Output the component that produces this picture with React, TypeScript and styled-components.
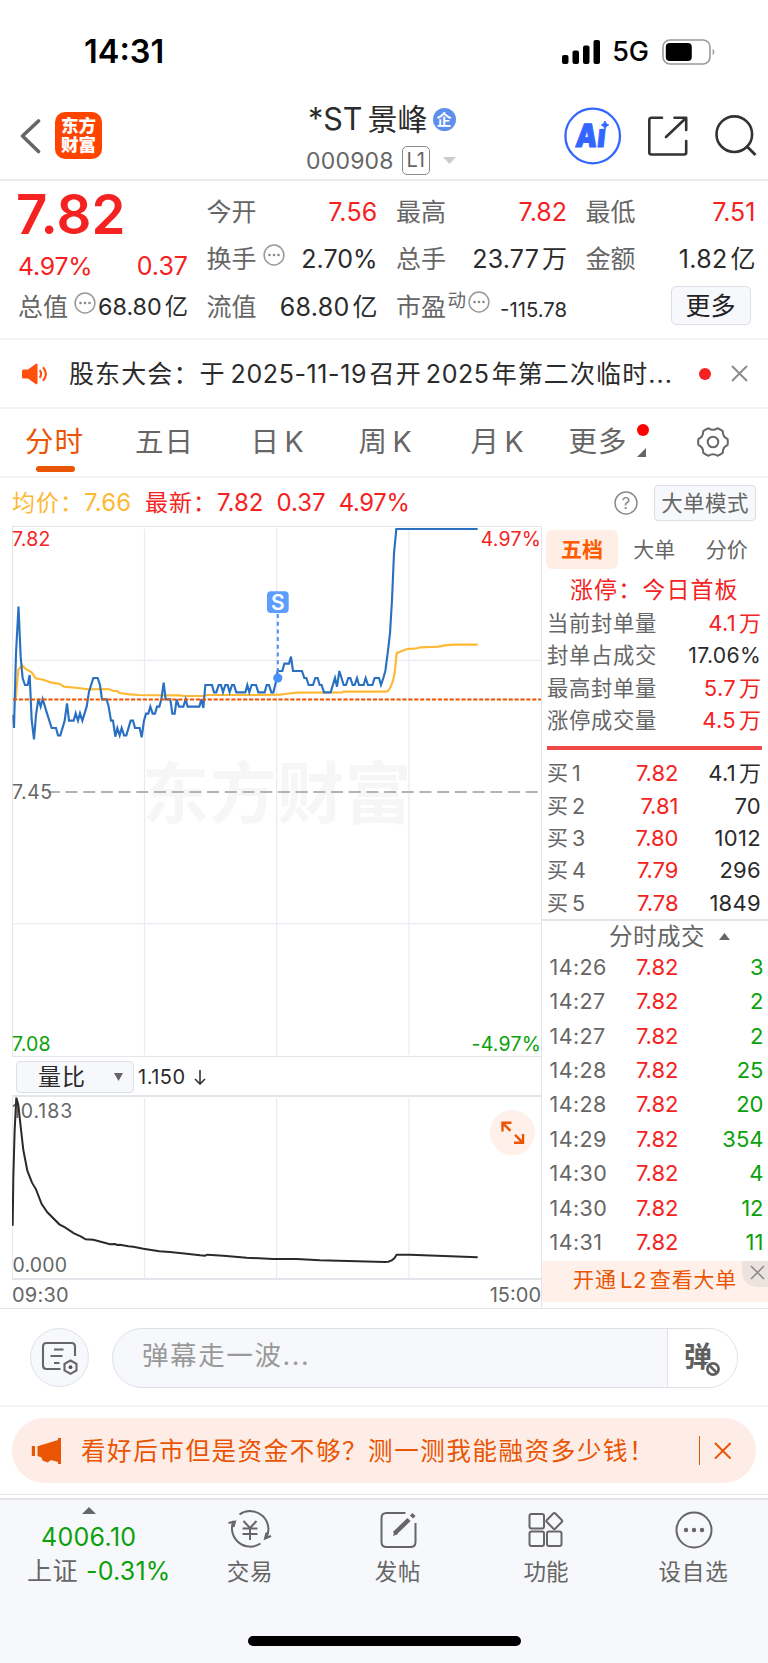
import React from "react";
import styled, { createGlobalStyle } from "styled-components";

const RED = "#f52222";
const GREEN = "#0aa10a";
const ORANGE = "#ea5504";
const GRAY = "#666";
const DARK = "#2b2b2b";
const LINE = "#e4e5ea";
const PANEL = "#f7f8fb";

const GlobalStyle = createGlobalStyle`
  * { box-sizing: border-box; }
  body {
    margin: 0;
    background: #fff;
    font-family: Inter, "Noto Sans CJK SC", sans-serif;
    color: ${DARK};
    -webkit-font-smoothing: antialiased;
  }
  svg { display: block; flex: none; }
`;

const Screen = styled.div`
  width: 768px;
  height: 1663px;
  display: flex;
  flex-direction: column;
  overflow: hidden;
  background: #fff;
`;

const Txt = styled.span<{ $s: number; $c?: string; $w?: number; $ls?: number; $ml?: number; $mt?: number }>`
  display: block;
  white-space: pre;
  line-height: 30px;
  font-size: ${(p) => p.$s}px;
  color: ${(p) => p.$c ?? DARK};
  font-weight: ${(p) => p.$w ?? 400};
  letter-spacing: ${(p) => p.$ls ?? 0}px;
  margin-left: ${(p) => p.$ml ?? 0}px;
  margin-top: ${(p) => p.$mt ?? 0}px;
`;

/* ---------- status bar ---------- */
const StatusBar = styled.header`
  height: 96px;
  padding: 7px 51px 0 84px;
  display: flex;
  align-items: center;
`;
const StatusRight = styled.div`
  margin-left: auto;
  display: flex;
  align-items: center;
`;

/* ---------- title bar ---------- */
const TitleBar = styled.div`
  height: 85px;
  border-bottom: 2px solid #ececef;
  display: grid;
  grid-template-columns: 307px 254px 1fr;
`;
const TitleLeft = styled.div`
  display: flex;
  padding: 16px 0 0 20px;
`;
const Logo = styled.div`
  width: 47px;
  height: 47px;
  margin-left: 14px;
  border-radius: 10px;
  background: #ff4400;
  color: #fff;
  font-weight: 900;
  font-size: 17.5px;
  line-height: 19px;
  text-align: center;
  padding-top: 4px;
`;
const TitleMid = styled.div`
  padding-top: 7px;
`;
const Row = styled.div<{ $h?: number; $pl?: number }>`
  display: flex;
  align-items: center;
  height: ${(p) => p.$h ?? 30}px;
  padding-left: ${(p) => p.$pl ?? 0}px;
`;
const Badge = styled.span`
  width: 23px;
  height: 23px;
  margin: 2px 0 0 5px;
  border-radius: 50%;
  background: #5f8fec;
  color: #fff;
  font-size: 15px;
  font-weight: 700;
  line-height: 23px;
  text-align: center;
`;
const LevelTag = styled.span`
  width: 28px;
  height: 29px;
  margin-left: 8px;
  border: 1.5px solid #8a8a8a;
  border-radius: 5px;
  color: ${GRAY};
  font-size: 20px;
  line-height: 27px;
  text-align: center;
`;
const TitleRight = styled.div`
  display: flex;
  padding-left: 3px;
  padding-top: 11px;
`;

/* ---------- quote block ---------- */
const Quote = styled.section`
  height: 159px;
  border-bottom: 2px solid #f3f3f5;
  padding: 7px 12px 0 18px;
  display: grid;
  grid-template-columns: 170px 171px 171px 170px;
  column-gap: 18.5px;
`;
const Column = styled.div`
  display: flex;
  flex-direction: column;
`;
const Pair = styled.div<{ $h?: number }>`
  height: ${(p) => p.$h ?? 47.5}px;
  display: flex;
  align-items: center;
  justify-content: space-between;
`;
const Label = styled.div`
  display: flex;
  align-items: center;
`;
const Raised = styled.span`
  display: flex;
  align-items: center;
  margin-top: -9px;
`;
const MoreButton = styled.button`
  width: 80px;
  height: 39px;
  margin: 3px 5px 0 auto;
  padding: 0;
  border: 1.5px solid #dcdfe6;
  border-radius: 5px;
  background: ${PANEL};
  color: #222;
  font: 400 25px/36px Inter, "Noto Sans CJK SC", sans-serif;
`;

/* ---------- notice ---------- */
const Notice = styled.div`
  height: 69px;
  border-bottom: 2px solid #f3f3f5;
  padding-left: 22px;
  display: flex;
  align-items: center;
`;
const Dot = styled.i<{ $ml?: number }>`
  width: 12px;
  height: 12px;
  margin-left: ${(p) => p.$ml ?? 0}px;
  border-radius: 50%;
  background: ${RED};
`;

/* ---------- tabs ---------- */
const Tabs = styled.nav`
  height: 69px;
  border-bottom: 2px solid #f3f3f5;
  display: flex;
  padding-left: 25px;
`;
const Tab = styled.div<{ $w: number; $on?: boolean }>`
  width: ${(p) => p.$w}px;
  position: relative;
  padding-top: 11px;
  font-size: 28.5px;
  letter-spacing: 1px;
  word-spacing: -4.5px;
  line-height: 44px;
  white-space: pre;
  color: ${(p) => (p.$on ? ORANGE : GRAY)};
  &::after {
    content: "";
    display: ${(p) => (p.$on ? "block" : "none")};
    width: 39px;
    height: 6px;
    margin: 2px 0 0 10.5px;
    border-radius: 3px;
    background: ${ORANGE};
  }
`;
const TabDot = styled(Dot)`
  position: absolute;
  left: 68.5px;
  top: 15px;
  background: #ff0000;
`;
const TabCorner = styled.svg`
  position: absolute;
  left: 68px;
  top: 39px;
`;

/* ---------- info line ---------- */
const Info = styled.div`
  height: 48px;
  padding: 1px 12px 0;
  display: flex;
  align-items: center;
`;
const ModeButton = styled.button`
  width: 102px;
  height: 36px;
  margin-left: 16px;
  padding: 0;
  border: 1.5px solid #dcdfe6;
  border-radius: 4px;
  background: ${PANEL};
  color: ${GRAY};
  font: 400 21.5px/32px Inter, "Noto Sans CJK SC", sans-serif;
  letter-spacing: 0.4px;
`;

/* ---------- main ---------- */
const Main = styled.main`
  height: 783px;
  display: grid;
  grid-template-columns: 542px 226px;
  border-bottom: 1.5px solid ${LINE};
`;
const ChartSide = styled.div`
  padding-left: 12px;
  border-right: 1.5px solid ${LINE};
`;
const Selector = styled.div`
  height: 38px;
  padding: 2px 0 0 4px;
  display: flex;
  align-items: center;
`;
const SelectBox = styled.div`
  width: 118px;
  height: 32px;
  padding-left: 21px;
  border: 1.5px solid #dcdfe6;
  border-radius: 4px;
  background: ${PANEL};
  display: flex;
  align-items: center;
`;
const TimeAxis = styled.div`
  height: 27px;
  display: flex;
  justify-content: space-between;
`;
const BookSide = styled.div`
  display: flex;
  flex-direction: column;
`;
const BookTabs = styled.div`
  height: 47px;
  padding: 4px 0 0 4px;
  display: flex;
`;
const BookTab = styled.div<{ $on?: boolean }>`
  width: ${(p) => (p.$on ? 72 : 72.5)}px;
  height: 39px;
  border-radius: 6px;
  background: ${(p) => (p.$on ? "#ffeee6" : "transparent")};
  color: ${(p) => (p.$on ? "#ff5a00" : GRAY)};
  font-weight: ${(p) => (p.$on ? 700 : 400)};
  font-size: 21px;
  line-height: 39px;
  text-align: center;
`;
const LimitTitle = styled.div`
  height: 34px;
  padding-left: 28px;
  color: ${RED};
  font-size: 23px;
  line-height: 35px;
  letter-spacing: 1.1px;
  white-space: pre;
`;
const LimitRow = styled.div`
  height: 32.3px;
  padding: 0 7px 0 5px;
  display: flex;
  align-items: center;
  justify-content: space-between;
`;
const RedBar = styled.div`
  height: 4px;
  margin: 10px 6px 7px 5px;
  background: #f04848;
`;
const TradeRow = styled.div<{ $h: number; $pl: number; $pr: number }>`
  height: ${(p) => p.$h}px;
  padding: 0 ${(p) => p.$pr}px 0 ${(p) => p.$pl}px;
  display: grid;
  grid-template-columns: ${(p) => 136.5 - p.$pl}px 1fr;
  align-items: center;
`;
const Split = styled.div`
  display: flex;
  justify-content: space-between;
`;
const End = styled.div`
  display: flex;
  justify-content: flex-end;
`;
const DealTitle = styled.div`
  height: 31px;
  border-top: 2px solid ${LINE};
  padding: 3px 0 0 67px;
  display: flex;
  align-items: center;
`;
const L2Banner = styled.div`
  height: 41px;
  margin-top: 2px;
  background: #fff0e9;
  padding-left: 31px;
  display: flex;
  align-items: flex-start;
  justify-content: space-between;
`;
const L2Text = styled.div`
  height: 38px;
  display: flex;
  align-items: center;
`;
const L2Close = styled.div`
  width: 26px;
  height: 26px;
  border-bottom-left-radius: 15px;
  background: #ece2de;
  display: flex;
  align-items: center;
  justify-content: center;
  padding: 0 0 4px 4px;
`;

/* ---------- comment bar ---------- */
const CommentBar = styled.div`
  height: 98px;
  border-bottom: 2px solid #f5f5f7;
  padding: 19px 30px 0;
  display: flex;
`;
const RoundButton = styled.div`
  width: 59px;
  height: 59px;
  border: 1.5px solid #dfe1e7;
  border-radius: 50%;
  background: ${PANEL};
`;
const Field = styled.div`
  width: 626px;
  height: 60px;
  margin-left: 23px;
  border: 1.5px solid #dfe1e7;
  border-radius: 30px;
  background: ${PANEL};
  display: flex;
  overflow: hidden;
`;
const FieldText = styled.div`
  width: 554px;
  padding-left: 29px;
  color: #999;
  font-size: 26.5px;
  letter-spacing: 1.6px;
  line-height: 53px;
`;
const FieldAction = styled.div`
  flex: 1;
  position: relative;
  border-left: 1.5px solid #dfe1e7;
  background: #fff;
  color: #606060;
  padding-left: 16px;
  font-size: 28px;
  font-weight: 700;
  line-height: 56px;
`;
const BanMark = styled.svg`
  position: absolute;
  left: 36px;
  top: 31px;
`;

/* ---------- promo ---------- */
const PromoWrap = styled.div`
  height: 88px;
  padding: 11px 12px 0;
  border-bottom: 1.5px solid ${LINE};
`;
const Promo = styled.div`
  height: 65px;
  border-radius: 33px;
  background: #fdede6;
  padding: 0 24px 0 19px;
  display: flex;
  align-items: center;
`;
const PromoDivider = styled.i`
  width: 1.5px;
  height: 29px;
  margin-left: auto;
  background: ${ORANGE};
`;

/* ---------- bottom nav ---------- */
const Bottom = styled.footer`
  flex: 1;
  margin-top: 3px;
  border-top: 2px solid ${LINE};
  background: ${PANEL};
  display: flex;
  flex-direction: column;
`;
const NavRow = styled.div`
  height: 136px;
  display: grid;
  grid-template-columns: 176px 148px 148px 148px 147px;
`;
const IndexCell = styled.div`
  padding: 7px 0 0 27px;
`;
const NavItem = styled.div`
  padding-top: 10px;
  display: flex;
  flex-direction: column;
  align-items: center;
  gap: 7px;
`;
const HomeBar = styled.div`
  width: 273px;
  height: 10px;
  margin-left: 247.5px;
  border-radius: 5px;
  background: #000;
`;

/* ---------- icons ---------- */
const Icon = styled.svg<{ $ml?: number | "auto" }>`
  margin-left: ${(p) => (p.$ml === "auto" ? "auto" : `${p.$ml ?? 0}px`)};
`;
const Dots = ({ ml = 0 }: { ml?: number }) => (
  <Icon $ml={ml} width="22" height="22" viewBox="0 0 22 22">
    <circle cx="11" cy="11" r="9.9" fill="none" stroke="#999" strokeWidth="1.5" />
    {[6.5, 11, 15.5].map((x) => (
      <circle key={x} cx={x} cy="11" r="1.3" fill="#888" />
    ))}
  </Icon>
);
const Cross = ({ r, c, w, ml = 0 }: { r: number; c: string; w: number; ml?: number }) => (
  <Icon $ml={ml} width={r * 2 + 2} height={r * 2 + 2}>
    <path d={`M1 1L${r * 2 + 1} ${r * 2 + 1}M${r * 2 + 1} 1L1 ${r * 2 + 1}`} stroke={c} strokeWidth={w} />
  </Icon>
);

/* Series points are stored in thirds of a pixel. */
const PRICE =
  "40,615 42,654 48,430 55.5,290 62,440 68,505 75,525 83,525 89,495 95,630 102,688 108,615 115,567 122,590 128,567 141,610 155,654 168,654 174,676 181,676 194,632 201,580 207,632 221,632 227,610 234,632 240,610 247,632 260,590 267,545 280,504 293,504 300,525 306,568 320,568 326,590 333,632 339,632 346,680 352,654 359,676 365,654 372,676 379,676 392,632 399,632 405,654 419,654 425,682 432,632 438,611 445,611 451,590 458,611 465,611 471,590 478,590 484,568 491,518 497,568 511,568 517,611 524,611 530,568 537,590 550,590 557,568 563,590 598,590 604,568 610,594 616,525 636,525 642,547 649,547 656,525 663,525 669,547 676,525 683,525 689,547 696,525 702,525 709,547 736,547 742,525 748,547 755,525 768,525 775,547 794,547 800,525 807,525 814,547 820,547 827,520 833,483 847,483 853,461 867,461 873,440 879,483 906,483 913,504 919,504 926,525 939,525 946,504 953,504 959,525 965,525 972,547 992,547 1005,504 1011,530 1018,483 1031,525 1038,525 1045,504 1051,504 1058,525 1064,525 1071,504 1077,525 1091,525 1097,504 1104,525 1117,525 1124,504 1137,504 1143,525 1150,504 1156,483 1163,430 1170,370 1176,270 1182,130 1189,57 1433,57";
const AVERAGE =
  "47,568 55,480 66,465 76,476 95,487 107,505 130,509 155,518 180,522 192,530 235,534 265,538 325,537 340,543 352,543 358,549 390,553 415,555 540,556 552,558 610,558 620,555 780,555 840,554 855,552 890,548 1027,547 1030,545 1158,545 1165,542 1172,530 1179,512 1184,490 1190,430 1205,423 1222,417 1245,416 1262,412 1295,411 1315,410 1335,406 1360,404 1433,404";
const RATIO =
  "38,587 40,440 44,300 49,203 55,225 62,290 70,360 82,422 96,458 108,478 125,522 142,547 178,583 195,592 222,610 242,619 257,628 280,629 330,643 345,642 352,645 360,644 385,649 400,650 430,656 478,664 510,666 560,671 600,676 615,677 622,674 670,677 740,683 820,687 890,687 960,691 1155,696 1165,695 1175,691 1183,685 1190,674 1230,674 1433,682";

const ChartLabel = styled.text<{ $ls?: number }>`
  font-size: 19.5px;
  letter-spacing: ${(p) => p.$ls ?? 0.2}px;
`;
const Watermark = styled.text`
  font-size: 67px;
  font-weight: 700;
  letter-spacing: 0.6px;
  fill: #f6f6f6;
`;

const PriceChart = () => (
  <svg width="529" height="531" viewBox="12 526 529 531">
    <path d="M12 526.5H542M12 1056.500H542M12.5 526V1057.5" stroke={LINE} strokeWidth="1.2" fill="none" />
    <path d="M144.5 529V1055M276.7 529V1055M409 529V1055M13 660.3H541M13 923.7H541" stroke="#e9ebf2" strokeWidth="1.2" />
    <Watermark x="142" y="818">东方财富</Watermark>
    <path d="M47.8 792H541" stroke="#b3b3b3" strokeWidth="1.900" strokeDasharray="12 5.7" />
    <g transform="translate(0 510) scale(0.33333)" fill="none" strokeWidth="6.4">
      <polyline points={AVERAGE} stroke="#fdb933" />
      <polyline points={PRICE} stroke="#2a70c2" />
    </g>
    <path d="M13 699.5H541" stroke={ORANGE} strokeWidth="2.2" strokeDasharray="4.2 1.7" />
    <path d="M277.8 614V674" stroke="#4a90f5" strokeWidth="2" strokeDasharray="4 3.7" />
    <circle cx="277.8" cy="678" r="4.6" fill="#4a8ff5" />
    <rect x="267" y="591.3" width="21.7" height="21.7" rx="4" fill="#5d9dff" />
    <text x="277.9" y="609.6" fontSize="21" fontWeight="600" fill="#fff" textAnchor="middle">S</text>
    <ChartLabel x="12" y="546" fill={RED}>7.82</ChartLabel>
    <ChartLabel x="541" y="546" fill={RED} textAnchor="end">4.97%</ChartLabel>
    <ChartLabel x="12" y="798.5" fill={GRAY} $ls={0.5}>7.45</ChartLabel>
    <ChartLabel x="12" y="1050.5" fill={GREEN}>7.08</ChartLabel>
    <ChartLabel x="541" y="1050.5" fill={GREEN} textAnchor="end">-4.97%</ChartLabel>
  </svg>
);

const RatioChart = () => (
  <svg width="529" height="185" viewBox="12 1095 529 185">
    <path d="M12 1096H542M12 1279H542" stroke={LINE} strokeWidth="2" />
    <path d="M12.5 1096V1279M144.5 1098V1278M276.7 1098V1278M409 1098V1278" stroke="#e9ebf2" strokeWidth="1.2" />
    <ChartLabel x="12" y="1118.3" fill={GRAY} $ls={0.9}>10.183</ChartLabel>
    <ChartLabel x="12.5" y="1271.5" fill={GRAY}>0.000</ChartLabel>
    <polyline points={RATIO} transform="translate(0 1030) scale(0.33333)" fill="none" stroke="#2a2a2a" strokeWidth="6" />
    <circle cx="512.3" cy="1132.5" r="22.6" fill="#fff1ea" />
    <path d="M502.500 1131.500V1122.800H511.500M503 1123.300L510.500 1130.800M523 1134V1142.800H514M522.500 1142.300L515 1134.800" stroke={ORANGE} strokeWidth="2.4" fill="none" />
  </svg>
);

const limits: [string, string, string][] = [
  ["当前封单量", "4.1 万", RED],
  ["封单占成交", "17.06%", DARK],
  ["最高封单量", "5.7 万", RED],
  ["涨停成交量", "4.5 万", RED],
];
const bids: [string, string, string][] = [
  ["1", "7.82", "4.1 万"],
  ["2", "7.81", "70"],
  ["3", "7.80", "1012"],
  ["4", "7.79", "296"],
  ["5", "7.78", "1849"],
];
const deals: [string, string][] = [
  ["14:26", "3"],
  ["14:27", "2"],
  ["14:27", "2"],
  ["14:28", "25"],
  ["14:28", "20"],
  ["14:29", "354"],
  ["14:30", "4"],
  ["14:30", "12"],
  ["14:31", "11"],
];

/* A small gap separates digits from the unit character that follows. */
const Amount = ({ v, s, c, ls = 0 }: { v: string; s: number; c?: string; ls?: number }) => {
  const [num, unit] = v.split(" ");
  return (
    <Label>
      <Txt $s={s} $c={c} $ls={ls}>{num}</Txt>
      {unit && <Txt $s={s} $c={c} $ml={3}>{unit}</Txt>}
    </Label>
  );
};

export default function App() {
  return (
    <Screen>
      <GlobalStyle />
      <StatusBar>
        <Txt $s={32.5} $w={600} $c="#000">14:31</Txt>
        <StatusRight>
          <svg width="39" height="24" viewBox="0 0 39 24">
            <rect x="0" y="15" width="6.5" height="9" rx="2" />
            <rect x="10.5" y="10.5" width="6.5" height="13.5" rx="2" />
            <rect x="21" y="5.5" width="6.5" height="18.5" rx="2" />
            <rect x="31.5" y="0" width="6.5" height="24" rx="2" />
          </svg>
          <Txt $s={27} $w={500} $c="#000" $ml={11}>5G</Txt>
          <Icon $ml={13} width="55" height="26" viewBox="0 0 55 26">
            <rect x="1" y="1" width="47" height="24" rx="7" fill="none" stroke="#999" strokeWidth="1.6" />
            <rect x="3.8" y="4" width="26" height="18" rx="4" />
            <path d="M50.7 9.5Q54 13 50.7 16.5Z" fill="#999" />
          </Icon>
        </StatusRight>
      </StatusBar>

      <TitleBar>
        <TitleLeft>
          <svg width="21" height="48" viewBox="0 0 21 48">
            <path d="M18.500 9L2.500 24L18.500 39.500" fill="none" stroke="#666" strokeWidth="3.6" strokeLinecap="round" strokeLinejoin="round" />
          </svg>
          <Logo>东方<br />财富</Logo>
        </TitleLeft>
        <TitleMid>
          <Row $h={31} $pl={1}>
            <Txt $s={30.5}>*ST</Txt>
            <Txt $s={30} $ml={5}>景峰</Txt>
            <Badge>企</Badge>
          </Row>
          <Row $h={53}>
            <Txt $s={23} $c={GRAY} $ls={0.2} $ml={-1}>000908</Txt>
            <LevelTag>L1</LevelTag>
            <Icon $ml={13} width="13" height="7">
              <path d="M0 0H13L6.5 7Z" fill="#ccc" />
            </Icon>
          </Row>
        </TitleMid>
        <TitleRight>
          <svg width="58" height="58" viewBox="564 107 58 58">
            <circle cx="592.7" cy="136" r="27.3" fill="none" stroke="#3366ff" strokeWidth="2.3" />
            <g transform="translate(574.8 146.5) skewX(-6) scale(0.85 1)">
              <text fontSize="32" fontWeight="900" fill="#3366ff" stroke="#3366ff" strokeWidth="1">Ai</text>
              <rect x="26.500" y="-28" width="14" height="9.500" fill="#fff" />
            </g>
            <path d="M605 121Q605.800 124.400 608.700 125Q605.800 125.700 605 129Q604.200 125.700 601.300 125Q604.200 124.400 605 121Z" fill="#3366ff" stroke="#3366ff" strokeWidth="1" />
          </svg>
          <Icon $ml={25} width="42" height="58" viewBox="647 107 42 58">
            <g fill="none" stroke="#333" strokeWidth="2.6" strokeLinecap="round" strokeLinejoin="round">
              <path d="M662 117.8H651.5Q649.3 117.8 649.3 120V152.5Q649.3 154.5 651.5 154.5H684Q686.2 154.5 686.2 152.5V141" />
              <path d="M674.5 117.8H686.2V130M685.5 118.5L666 137" />
            </g>
          </Icon>
          <Icon $ml={24} width="44" height="58" viewBox="713 107 44 58">
            <circle cx="734.3" cy="134.2" r="17.8" fill="none" stroke="#333" strokeWidth="2.6" />
            <path d="M747 146.5L755.5 155" stroke="#333" strokeWidth="2.8" />
          </Icon>
        </TitleRight>
      </TitleBar>

      <Quote>
        <Column>
          <Pair $h={52}>
            <Txt $s={54.5} $w={600} $c={RED} $ls={0} $ml={-2}>7.82</Txt>
          </Pair>
          <Pair $h={52}>
            <Txt $s={24.8} $c={RED} $ls={-0.2}>4.97%</Txt>
            <Txt $s={25} $c={RED}>0.37</Txt>
          </Pair>
          <Pair $h={30}>
            <Label>
              <Txt $s={25} $c={GRAY}>总值</Txt>
              <Raised><Dots ml={6} /></Raised>
            </Label>
            <Amount v="68.80 亿" s={23.3} />
          </Pair>
        </Column>
        <Column>
          <Pair>
            <Txt $s={25} $c={GRAY}>今开</Txt>
            <Txt $s={25} $c={RED} $ls={0.2}>7.56</Txt>
          </Pair>
          <Pair>
            <Label>
              <Txt $s={25} $c={GRAY}>换手</Txt>
              <Raised><Dots ml={6} /></Raised>
            </Label>
            <Txt $s={25}>2.70%</Txt>
          </Pair>
          <Pair>
            <Txt $s={25} $c={GRAY}>流值</Txt>
            <Amount v="68.80 亿" s={25} ls={0.3} />
          </Pair>
        </Column>
        <Column>
          <Pair>
            <Txt $s={25} $c={GRAY}>最高</Txt>
            <Txt $s={25} $c={RED}>7.82</Txt>
          </Pair>
          <Pair>
            <Txt $s={25} $c={GRAY}>总手</Txt>
            <Amount v="23.77 万" s={25} ls={0.2} />
          </Pair>
          <Pair>
            <Label>
              <Txt $s={25} $c={GRAY}>市盈</Txt>
              <Raised>
                <Txt $s={18.5} $c={GRAY} $ml={1.5} $mt={-4}>动</Txt>
                <Dots ml={2} />
              </Raised>
            </Label>
            <Txt $s={20.3} $mt={6}>-115.78</Txt>
          </Pair>
        </Column>
        <Column>
          <Pair>
            <Txt $s={25} $c={GRAY}>最低</Txt>
            <Txt $s={25} $c={RED}>7.51</Txt>
          </Pair>
          <Pair>
            <Txt $s={25} $c={GRAY}>金额</Txt>
            <Amount v="1.82 亿" s={25} ls={0.3} />
          </Pair>
          <MoreButton>更多</MoreButton>
        </Column>
      </Quote>

      <Notice>
        <svg width="26" height="22" viewBox="0 0 26 22">
          <path d="M1.5 6.5H6L14 .8Q15.5 .5 15.5 2V20Q15.5 21.5 14 21.2L6 15.5H1.500Q0 15.5 0 14V8Q0 6.5 1.5 6.5Z" fill="#ff4f0a" />
          <path d="M17.8 7.2Q20.3 11 17.8 14.8M21 4.3Q26.8 11 21 17.7" fill="none" stroke="#ff4f0a" strokeWidth="2.1" />
        </svg>
        <Txt $s={25} $ls={1.1} $ml={21}>股东大会：于</Txt>
        <Txt $s={25} $ls={0.6} $ml={5}>2025-11-19</Txt>
        <Txt $s={25} $ls={1.1} $ml={2.5}>召开</Txt>
        <Txt $s={25} $ls={0.6} $ml={4}>2025</Txt>
        <Txt $s={25} $ls={1.1} $ml={2}>年第二次临时...</Txt>
        <Dot $ml={26} />
        <Cross r={7.5} c="#8c8c8c" w={2} ml={20} />
      </Notice>

      <Tabs>
        <Tab $w={110} $on>分时</Tab>
        <Tab $w={115.5}>五日</Tab>
        <Tab $w={108}>日 K</Tab>
        <Tab $w={112}>周 K</Tab>
        <Tab $w={98}>月 K</Tab>
        <Tab $w={128.5}>
          更多
          <TabDot />
          <TabCorner width="9" height="9"><path d="M9 0V9H0Z" fill="#666" /></TabCorner>
        </Tab>
        <svg width="32" height="66" viewBox="-16 -33 32 66">
          <g fill="none" stroke="#666" strokeWidth="2">
            <circle r="5.3" />
            <path strokeLinejoin="round" d="M-4.5 -13.8Q0 -10.5 4.5 -13.8Q7.8 -12.6 9.8 -10.8Q9.5 -5.2 14.5 -3Q15.2 0 14.5 3Q9.5 5.2 9.8 10.8Q7.8 12.6 4.5 13.8Q0 10.5 -4.5 13.8Q-7.8 12.6 -9.8 10.8Q-9.5 5.2 -14.5 3Q-15.2 0 -14.5 -3Q-9.5 -5.2 -9.8 -10.8Q-7.8 -12.6 -4.5 -13.8Z" />
          </g>
        </svg>
      </Tabs>

      <Info>
        <Txt $s={23} $ls={1} $c="#fdb933">均价：</Txt>
        <Txt $s={24} $ls={0.2} $c="#fdb933">7.66</Txt>
        <Txt $s={23} $ls={1} $c={RED} $ml={13.5}>最新：</Txt>
        <Txt $s={24} $c={RED}>7.82</Txt>
        <Txt $s={24} $c={RED} $ml={13}>0.37</Txt>
        <Txt $s={23.8} $ls={-0.3} $c={RED} $ml={13}>4.97%</Txt>
        <Icon $ml="auto" width="24" height="24" viewBox="0 0 24 24">
          <circle cx="12" cy="12" r="11" fill="none" stroke="#8a8a8a" strokeWidth="1.5" />
          <text x="12" y="18" fontSize="16.5" fill="#8a8a8a" textAnchor="middle">?</text>
        </Icon>
        <ModeButton>大单模式</ModeButton>
      </Info>

      <Main>
        <ChartSide>
          <PriceChart />
          <Selector>
            <SelectBox>
              <Txt $s={23} $ls={1}>量比</Txt>
              <Icon $ml={28} width="9" height="8"><path d="M0 0H9L4.5 8Z" fill="#666" /></Icon>
            </SelectBox>
            <Txt $s={20} $ls={0.5} $ml={4}>1.150</Txt>
            <Icon $ml={8} width="12" height="15" viewBox="0 0 12 15">
              <path d="M6 0V14M1 9L6 14L11 9" fill="none" stroke="#333" strokeWidth="1.6" />
            </Icon>
          </Selector>
          <RatioChart />
          <TimeAxis>
            <Txt $s={20} $c={GRAY} $ls={0.2}>09:30</Txt>
            <Txt $s={20} $c={GRAY}>15:00</Txt>
          </TimeAxis>
        </ChartSide>
        <BookSide>
          <BookTabs>
            <BookTab $on>五档</BookTab>
            <BookTab>大单</BookTab>
            <BookTab>分价</BookTab>
          </BookTabs>
          <LimitTitle>涨停：今日首板</LimitTitle>
          {limits.map(([label, value, color]) => (
            <LimitRow key={label}>
              <Txt $s={21.3} $c={GRAY} $ls={0.7}>{label}</Txt>
              <Amount v={value} s={value.endsWith("%") ? 21.2 : 22} c={color} ls={0.3} />
            </LimitRow>
          ))}
          <RedBar />
          {bids.map(([n, price, vol]) => (
            <TradeRow key={n} $h={32.3} $pl={5} $pr={7}>
              <Split>
                <Label>
                  <Txt $s={21} $c={GRAY}>买</Txt>
                  <Txt $s={21.5} $c={GRAY} $ml={4}>{n}</Txt>
                </Label>
                <Txt $s={22} $c={RED}>{price}</Txt>
              </Split>
              <End><Amount v={vol} s={22} ls={0.3} /></End>
            </TradeRow>
          ))}
          <DealTitle>
            <Txt $s={23.5} $c={GRAY} $ls={0.5}>分时成交</Txt>
            <Icon $ml={14} width="11" height="7"><path d="M0 7H11L5.5 0Z" fill="#666" /></Icon>
          </DealTitle>
          {deals.map(([time, vol], i) => (
            <TradeRow key={i} $h={34.4} $pl={7.5} $pr={4.5}>
              <Split>
                <Txt $s={21.5} $c={GRAY} $ls={0.4}>{time}</Txt>
                <Txt $s={22} $c={RED}>7.82</Txt>
              </Split>
              <End><Txt $s={22} $c={GREEN}>{vol}</Txt></End>
            </TradeRow>
          ))}
          <L2Banner>
            <L2Text>
              <Txt $s={21} $c={ORANGE} $ls={1}>开通</Txt>
              <Txt $s={22} $c={ORANGE} $ls={0.5} $ml={3}>L2</Txt>
              <Txt $s={21} $c={ORANGE} $ls={0.8} $ml={3}>查看大单</Txt>
            </L2Text>
            <L2Close><Cross r={6.5} c="#888" w={1.5} /></L2Close>
          </L2Banner>
        </BookSide>
      </Main>

      <CommentBar>
        <RoundButton>
          <svg width="56" height="56" viewBox="31.5 1329 56 56">
            <g fill="none" stroke="#666" strokeWidth="2.1">
              <path d="M61 1369H47Q43.5 1369 43.5 1365.5V1346.5Q43.5 1343 47 1343H72Q75.5 1343 75.5 1346.5V1356" />
              <path d="M54.5 1349.5H64M51 1356H63M54.5 1363H60" />
              <path d="M71 1360.5L77 1363.8V1370.5L71 1373.8L65 1370.5V1363.8Z" />
            </g>
            <circle cx="71" cy="1367.2" r="1.9" fill="#555" />
          </svg>
        </RoundButton>
        <Field>
          <FieldText>弹幕走一波...</FieldText>
          <FieldAction>
            弹
            <BanMark width="18" height="18" viewBox="-9 -9 18 18">
              <circle r="8.3" fill="#fff" />
              <circle r="5.6" fill="none" stroke="#606060" strokeWidth="2.7" />
              <path d="M-4 -4L4 4" stroke="#606060" strokeWidth="2.7" />
            </BanMark>
          </FieldAction>
        </Field>
      </CommentBar>

      <PromoWrap>
        <Promo>
          <svg width="31" height="28" viewBox="0 0 31 28">
            <path d="M0.8 9H4V19H0.8ZM6.5 9.300L27 3V1H30V27H27V25L20 23L16.5 25.500L11.5 23.500L10.5 20.500L6.5 19Z" fill={ORANGE} />
          </svg>
          <Txt $s={24.5} $ls={1.6} $c={ORANGE} $ml={19}>看好后市但是资金不够？测一测我能融资多少钱！</Txt>
          <PromoDivider />
          <Cross r={7.8} c={ORANGE} w={2} ml={14} />
        </Promo>
      </PromoWrap>

      <Bottom>
        <NavRow>
          <IndexCell>
            <Icon $ml={55} width="14" height="7"><path d="M0 7H14L7 0Z" fill="#666" /></Icon>
            <Row $h={45} $pl={14}><Txt $s={25} $ls={0.3} $c={GREEN}>4006.10</Txt></Row>
            <Row $h={24}>
              <Txt $s={25} $c={GRAY} $ls={0.5}>上证</Txt>
              <Txt $s={25} $c={GREEN} $ls={0.2} $ml={8}>-0.31%</Txt>
            </Row>
          </IndexCell>
          <NavItem>
            <svg width="44" height="40" viewBox="229 1510 44 40">
              <g fill="none" stroke="#666" strokeWidth="2">
                <path d="M240.5 1514.5A18.300 18.300 0 0 1 267 1538.5M261.500 1543.500A18.300 18.300 0 0 1 234.500 1521" />
                <path d="M229.5 1523L236 1521.5L234.5 1527M272 1536L266 1538.5L267.5 1532.5" />
                <path d="M244.5 1521L251 1528L257.5 1521M251 1528V1540M243.5 1528.5H258.5M243.5 1534H258.5" />
              </g>
            </svg>
            <Txt $s={22.5} $c={GRAY} $ls={0.8}>交易</Txt>
          </NavItem>
          <NavItem>
            <svg width="40" height="40" viewBox="378.5 1510 40 40">
              <g fill="none" stroke="#666" strokeWidth="2">
                <path d="M406 1513H387Q382 1513 382 1518V1542Q382 1547 387 1547H411Q416 1547 416 1542V1523" />
                <path d="M395 1533.5L409.5 1519.5M412 1517L414.5 1514.5" strokeWidth="4.5" />
              </g>
              <path d="M393.5 1536L395 1531L398.5 1534Z" fill="#666" />
            </svg>
            <Txt $s={22.5} $c={GRAY} $ls={0.8}>发帖</Txt>
          </NavItem>
          <NavItem>
            <svg width="40" height="40" viewBox="527 1510 40 40">
              <g fill="none" stroke="#666" strokeWidth="2">
                <rect x="530.5" y="1514" width="14.5" height="14.5" rx="2" />
                <rect x="530.5" y="1531.5" width="14.5" height="14.5" rx="2" />
                <rect x="548" y="1531.5" width="14.5" height="14.5" rx="2" />
                <rect x="549.3" y="1515" width="12" height="12" rx="1.5" transform="rotate(45 555.3 1521)" />
              </g>
            </svg>
            <Txt $s={22.5} $c={GRAY}>功能</Txt>
          </NavItem>
          <NavItem>
            <svg width="40" height="40" viewBox="-20 -20 40 40">
              <circle r="17.5" fill="none" stroke="#666" strokeWidth="2" />
              <circle cx="-8" r="2.2" fill="#666" />
              <circle r="2.2" fill="#666" />
              <circle cx="8" r="2.2" fill="#666" />
            </svg>
            <Txt $s={22.5} $c={GRAY} $ls={0.8}>设自选</Txt>
          </NavItem>
        </NavRow>
        <HomeBar />
      </Bottom>
    </Screen>
  );
}
